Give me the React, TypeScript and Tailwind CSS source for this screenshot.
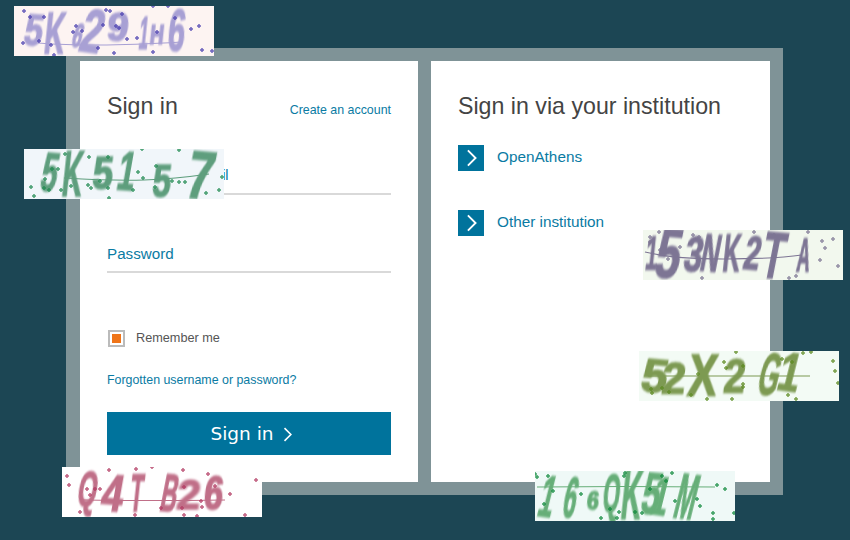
import React from "react";

// [char, left, right, top, bottom, rotation]
type Glyph = [string, number, number, number, number, number?];

interface CaptchaProps {
  className: string;
  color: string;
  dotColor: string;
  chars: Glyph[];
  dots: number[][];
  line: string;
}

const WIDE: Record<string, number> = { K: 0.72, H: 0.72, M: 0.83, Q: 0.78, G: 0.78, X: 0.67, N: 0.72, B: 0.72, T: 0.61, A: 0.72, "1": 0.42 };

// noisy letters, each one stretched into its own box on the image
const Captcha: React.FC<CaptchaProps> = ({ className, color, dotColor, chars, dots, line }) => {
  return (
    <div className={`absolute w-[200px] h-[50px] overflow-hidden ${className}`}>
      {chars.map(([ch, left, right, top, bottom, rot], i) => {
        const size = (bottom - top) / 0.72;
        const natural = (WIDE[ch] ?? 0.52) * size;
        return (
          <span
            key={i}
            className="absolute font-['Liberation_Sans',sans-serif] font-bold leading-none blur-[0.8px] [-webkit-text-stroke:1.6px_currentColor]"
            style={{
              left: (left + right) / 2,
              top: (top + bottom) / 2,
              color,
              fontSize: size,
              transform: `translate(-50%, -50%) rotate(${rot ?? 0}deg) skewX(-6deg) scaleX(${(right - left) / natural})`,
            }}
          >
            {ch}
          </span>
        );
      })}
      <svg className="absolute inset-0" width="200" height="50" viewBox="0 0 200 50">
        <path d={line} fill="none" stroke={color} strokeWidth="1.2" />
        {dots.map(([x, y], i) => (
          <path
            key={i}
            d={`M${x - 2} ${y}H${x + 2}M${x} ${y - 2}V${y + 2}`}
            stroke={dotColor}
            strokeWidth="1.5"
            opacity="0.8"
          />
        ))}
      </svg>
    </div>
  );
};

const Chevron: React.FC<{ className?: string }> = ({ className }) => (
  <svg className={className} viewBox="0 0 12 20" fill="none" stroke="currentColor" strokeWidth="2.1">
    <path d="M2 1.5 10.5 10 2 18.5" />
  </svg>
);

const InstitutionLink: React.FC<{ label: string }> = ({ label }) => (
  <a className="flex items-center gap-[13px] text-[15.3px] text-[#0a7ba3]">
    <span className="w-[26px] h-[26px] bg-[#00739c] text-white flex items-center justify-center">
      <Chevron className="w-[11px] h-[18px]" />
    </span>
    <span className="pb-[2px]">{label}</span>
  </a>
);

export default function App() {
  return (
    <div className="relative h-[540px] w-[850px] overflow-hidden bg-[#1c4654] pl-[66px] pt-[48px] font-['Liberation_Sans',sans-serif]">
      <div className="w-[717px] h-[447px] bg-[#7f9397] pl-[14px] pt-[13px] flex gap-[13px]">
        <div className="w-[338px] h-[421px] bg-white px-[27px] flex flex-col">
          <div className="flex items-baseline justify-between mt-[30px]">
            <h2 className="text-[23.2px] leading-[30px] text-[#444]">Sign in</h2>
            <a className="text-[12.4px] text-[#0a7ba3]">Create an account</a>
          </div>
          <div className="mt-[44px] h-[30px] border-b-2 border-[#d9d9d9] text-[14.4px] text-[#0a7ba3]">Username or email</div>
          <div className="mt-[48px] h-[30px] border-b-2 border-[#d9d9d9] text-[15.2px] text-[#0a7ba3]">Password</div>
          <label className="mt-[56px] flex items-center gap-[11px] text-[12.7px] text-[#555]">
            <span className="ml-[1px] w-[17px] h-[17px] border-2 border-[#bbb] flex items-center justify-center">
              <span className="w-[9px] h-[9px] bg-[#ef7418]" />
            </span>
            Remember me
          </label>
          <a className="mt-[23px] text-[12.4px] text-[#0a7ba3]">Forgotten username or password?</a>
          <button className="mt-[22px] h-[43px] w-full bg-[#00739c] text-white text-[18.5px] pl-[4px] pt-[2px] font-['DejaVu_Sans',sans-serif] flex items-center justify-center gap-[9px]">
            Sign in
            <Chevron className="w-[9px] h-[15px]" />
          </button>
        </div>
        <div className="w-[339px] h-[421px] bg-white px-[27px] flex flex-col">
          <h2 className="mt-[30px] text-[23.2px] leading-[30px] text-[#444]">Sign in via your institution</h2>
          <div className="mt-[24px] flex flex-col gap-[39px]">
            <InstitutionLink label="OpenAthens" />
            <InstitutionLink label="Other institution" />
          </div>
        </div>
      </div>

      <Captcha
        className="left-[14px] top-[6px] bg-[#fdf4f2]"
        color="#a8a0d4"
        dotColor="#4a3fb0"
        line="M24 37Q50 39 84 39T168 36"
        chars={[
          ["5", 11, 28, 9, 41, 4],
          ["K", 31, 51, 7, 49, 0],
          ["6", 59, 68, 17, 42, 10],
          ["2", 69, 89, 2, 47, 8],
          ["9", 94, 114, 7, 36, 0],
          ["1", 126, 133, 11, 44, 0],
          ["H", 136, 150, 19, 39, 0],
          ["6", 155, 171, 4, 46, 0],
        ]}
        dots={[[10, 5], [16, 11], [30, 11], [9, 37], [25, 35], [37, 39], [40, 49], [62, 20], [59, 26], [68, 25], [89, 19], [92, 4], [96, 5], [108, 8], [102, 20], [105, 22], [113, 33], [123, 32], [84, 42], [100, 47], [143, 26], [161, 12], [139, 46], [177, 23], [185, 20], [188, 44], [198, 45], [139, 0], [154, 0]]}
      />
      <Captcha
        className="left-[24px] top-[149px] bg-[#f1f6fa]"
        color="#5e9e7d"
        dotColor="#1f8a50"
        line="M40 29Q90 32 120 31T185 25"
        chars={[
          ["5", 18, 33, 4, 44, 5],
          ["K", 39, 59, 1, 48, 0],
          ["5", 69, 88, 8, 41, 0],
          ["1", 96, 109, 3, 43, 4],
          ["5", 129, 146, 16, 49, 0],
          ["7", 164, 189, 1, 50, 5],
        ]}
        dots={[[7, 38], [10, 47], [21, 30], [28, 20], [34, 20], [41, 5], [20, 39], [25, 41], [37, 41], [47, 37], [65, 8], [84, 8], [64, 36], [67, 39], [76, 32], [84, 39], [109, 41], [114, 23], [119, 29], [132, 17], [131, 38], [155, 33], [148, 32], [161, 33], [155, 1], [118, 0], [85, 49], [182, 44], [195, 41], [198, 28]]}
      />
      <Captcha
        className="left-[643px] top-[230px] bg-[#f2f8ee]"
        color="#7d7594"
        dotColor="#7d7594"
        line="M2 22Q30 29 80 29T159 25"
        chars={[
          ["1", 4, 13, 5, 40, 0],
          ["5", 14, 37, 0, 50, 5],
          ["3", 42, 59, 7, 43, 4],
          ["N", 59, 77, 5, 43, 5],
          ["K", 80, 97, 5, 43, 0],
          ["2", 102, 117, 5, 40, 5],
          ["T", 120, 142, 2, 50, 5],
          ["A", 154, 167, 7, 42, 0],
        ]}
        dots={[[7, 7], [16, 2], [7, 12], [17, 20], [37, 17], [50, 5], [56, 7], [25, 29], [30, 42], [59, 48], [111, 2], [131, 5], [131, 25], [165, 2], [179, 11], [190, 9], [182, 18], [177, 30], [195, 36], [146, 48], [153, 46]]}
      />
      <Captcha
        className="left-[639px] top-[351px] bg-[#f3fbf5]"
        color="#7d9a52"
        dotColor="#5c8a20"
        line="M9 25H171"
        chars={[
          ["5", 4, 28, 7, 42, 5],
          ["2", 24, 46, 12, 44, 0],
          ["X", 49, 78, 4, 46, 0],
          ["2", 86, 106, 7, 42, 0],
          ["G", 121, 141, 2, 46, 8],
          ["1", 143, 159, 2, 42, 8],
        ]}
        dots={[[97, 1], [85, 11], [87, 17], [59, 23], [12, 38], [23, 37], [13, 42], [30, 41], [52, 44], [68, 48], [93, 48], [104, 15], [104, 33], [104, 36], [143, 8], [153, 11], [164, 2], [172, 1], [149, 44], [157, 48], [194, 10], [196, 20], [199, 32]]}
      />
      <Captcha
        className="left-[62px] top-[467px] bg-white"
        color="#c06f88"
        dotColor="#b33a62"
        line="M21 33Q90 34 163 33"
        chars={[
          ["Q", 16, 35, 5, 41, 4],
          ["4", 41, 61, 8, 45, 4],
          ["T", 68, 81, 8, 46, 0],
          ["B", 100, 116, 8, 46, 5],
          ["2", 116, 138, 13, 43, 0],
          ["6", 143, 161, 8, 43, 0],
        ]}
        dots={[[5, 9], [7, 18], [25, 22], [33, 22], [38, 22], [47, 3], [74, 2], [90, 0], [121, 3], [146, 7], [153, 19], [18, 45], [28, 28], [73, 48], [99, 41], [120, 41], [140, 40], [139, 34], [122, 20], [168, 27], [194, 13], [122, 48], [135, 49], [183, 48]]}
      />
      <Captcha
        className="left-[535px] top-[471px] bg-[#eff9f7]"
        color="#66ae78"
        dotColor="#0f8a3c"
        line="M2 16Q90 15 180 16"
        chars={[
          ["1", 7, 18, 4, 47, 8],
          ["6", 30, 42, 6, 47, 5],
          ["6", 52, 63, 21, 39, 0],
          ["Q", 68, 85, 2, 41, 0],
          ["K", 87, 107, 0, 50, 0],
          ["5", 108, 125, 1, 44, 5],
          ["1", 120, 132, 6, 46, 8],
          ["M", 142, 162, 2, 49, 8],
        ]}
        dots={[[0, 3], [2, 6], [13, 5], [18, 20], [9, 33], [46, 23], [90, 2], [89, 5], [127, 5], [137, 2], [131, 10], [115, 18], [140, 30], [75, 38], [84, 41], [100, 41], [107, 42], [66, 47], [82, 47], [162, 28], [165, 35], [182, 14], [190, 18], [178, 42], [178, 48], [199, 42]]}
      />
    </div>
  );
}
